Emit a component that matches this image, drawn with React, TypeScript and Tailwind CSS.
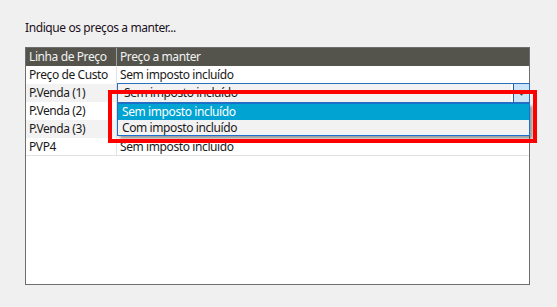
import React from "react";

const rows = [
  { name: "Preço de Custo", value: "Sem imposto incluído", alt: false },
  { name: "P.Venda (1)", value: "", alt: true },
  { name: "P.Venda (2)", value: "", alt: false },
  { name: "P.Venda (3)", value: "", alt: true },
  { name: "PVP4", value: "Sem imposto incluído", alt: false },
];

export default function App() {
  return (
    <div
      className="relative w-[557px] h-[307px] bg-[#f0f0f0] overflow-hidden text-[12px] tracking-[-0.4px] text-[#1a1a1a]"
      style={{ fontFamily: '"Noto Sans", "Open Sans", sans-serif' }}
    >
      <div className="pl-[25px] pt-[20px] h-[47px] leading-[16px] text-[#1b1020]">
        Indique os preços a manter...
      </div>
      <div className="relative ml-[25px] w-[505px] h-[238px] border border-[#6e6e6e] bg-white">
        <div className="flex h-[18px] bg-[#54544c] text-[#f2f2f2] leading-[18px]">
          <div className="w-[91px] pl-[3px] border-r border-[#a0a09a]">Linha de Preço</div>
          <div className="flex-1 pl-[3px]">Preço a manter</div>
        </div>
        {rows.map((r, i) => (
          <div
            key={i}
            className={`flex h-[18px] leading-[18px] ${r.alt ? "bg-[#f2f2f2]" : "bg-white"} ${
              i === rows.length - 1 ? "border-b border-[#e2e2e2]" : ""
            }`}
          >
            <div className="w-[91px] pl-[3px] border-r border-[#e2e2e2]">{r.name}</div>
            <div className="flex-1 pl-[3px]">{r.value}</div>
          </div>
        ))}

        {/* combo box */}
        <div className="absolute left-[91px] top-[35px] w-[413px] h-[20px] border border-[#2a6fba] bg-[#f2f2f2] flex">
          <div className="flex-1 pl-[6px] leading-[18px] overflow-hidden mr-[2px]">Sem imposto incluído</div>
          <div className="w-[2px] bg-white" />
          <div className="w-[16px] h-full bg-[#cce4f7] border-l border-[#2a5f9e] flex items-center justify-center">
            <svg width="7" height="5" viewBox="0 0 7 5">
              <path d="M1 1.5 L3.5 4 L6 1.5" fill="none" stroke="#505050" strokeWidth="1.2" />
            </svg>
          </div>
        </div>

        {/* dropdown list */}
        <div className="absolute left-[91px] top-[55px] w-[413px] h-[33px] border border-[#1a6fd0] bg-[#f2f2f2] shadow-[3px_3px_3px_rgba(0,0,0,0.35)]">
          <div className="h-[16px] bg-[#00a3d2] text-white leading-[16px] pl-[4px]">Sem imposto incluído</div>
          <div className="h-[15px] leading-[15px] pl-[4px]">Com imposto incluído</div>
        </div>
      </div>

      {/* red highlight */}
      <div className="absolute left-[108px] top-[90px] w-[429px] h-[53px] border-4 border-[#ff0000]" />
    </div>
  );
}
